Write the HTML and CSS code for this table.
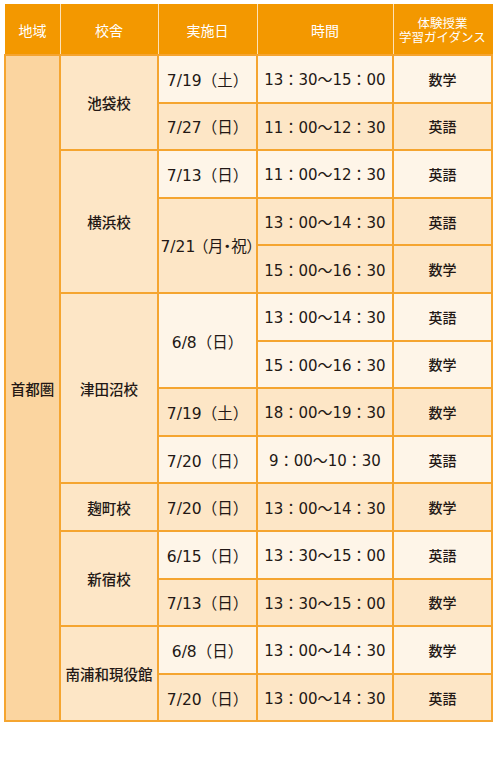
FILE: index.html
```html
<!DOCTYPE html>
<html lang="ja">
<head>
<meta charset="utf-8">
<link rel="stylesheet" href="styles.css">
</head>
<body>
<div class="page">
<table class="tbl">
  <colgroup>
    <col class="c1"><col class="c2"><col class="c3"><col class="c4"><col class="c5">
  </colgroup>
  <thead>
    <tr class="hd">
      <th>地域</th><th>校舎</th><th>実施日</th><th>時間</th><th class="sm"><span class="ln">体験授業</span><span class="ln">学習ガイダンス</span></th>
    </tr>
  </thead>
  <tbody>
    <tr class="lt"><td class="region" rowspan="14">首都圏</td><td class="school" rowspan="2">池袋校</td><td class="date">7/19（土）</td><td class="time">13：30〜15：00</td><td class="subj">数学</td></tr>
    <tr class="pk"><td class="date">7/27（日）</td><td class="time">11：00〜12：30</td><td class="subj">英語</td></tr>
    <tr class="lt"><td class="school" rowspan="3">横浜校</td><td class="date">7/13（日）</td><td class="time">11：00〜12：30</td><td class="subj">英語</td></tr>
    <tr class="pk"><td rowspan="2" class="date narrow">7/21 （月・祝）</td><td class="time">13：00〜14：30</td><td class="subj">英語</td></tr>
    <tr class="pk"><td class="time">15：00〜16：30</td><td class="subj">数学</td></tr>
    <tr class="lt"><td class="school" rowspan="4">津田沼校</td><td rowspan="2" class="date">6/8（日）</td><td class="time">13：00〜14：30</td><td class="subj">英語</td></tr>
    <tr class="lt"><td class="time">15：00〜16：30</td><td class="subj">数学</td></tr>
    <tr class="pk"><td class="date">7/19（土）</td><td class="time">18：00〜19：30</td><td class="subj">数学</td></tr>
    <tr class="lt"><td class="date">7/20（日）</td><td class="time">9：00〜10：30</td><td class="subj">英語</td></tr>
    <tr class="pk"><td class="school">麹町校</td><td class="date">7/20（日）</td><td class="time">13：00〜14：30</td><td class="subj">数学</td></tr>
    <tr class="lt"><td class="school" rowspan="2">新宿校</td><td class="date">6/15（日）</td><td class="time">13：30〜15：00</td><td class="subj">英語</td></tr>
    <tr class="pk"><td class="date">7/13（日）</td><td class="time">13：30〜15：00</td><td class="subj">数学</td></tr>
    <tr class="lt"><td class="school" rowspan="2">南浦和現役館</td><td class="date">6/8（日）</td><td class="time">13：00〜14：30</td><td class="subj">数学</td></tr>
    <tr class="pk"><td class="date">7/20（日）</td><td class="time">13：00〜14：30</td><td class="subj">英語</td></tr>
  </tbody>
</table>
</div>
</body>
</html>
```

FILE: styles.css
```css
html, body {
  margin: 0;
  padding: 0;
  background: #ffffff;
}
.page {
  padding: 4px;
  width: 487px;
  font-family: "DejaVu Sans", "Noto Sans CJK JP", sans-serif;
  color: #231815;
}
.tbl {
  border-collapse: collapse;
  table-layout: fixed;
  width: 487px;
  font-size: 15px;
}
.c1 { width: 55px; }
.c2 { width: 98px; }
.c3 { width: 99px; }
.c4 { width: 136px; }
.c5 { width: 99px; }

.tbl th {
  background: #f39800;
  color: #ffffff;
  font-family: "Noto Sans CJK JP", sans-serif;
  font-weight: normal;
  font-size: 14px;
  height: 49px;
  padding: 0;
  text-align: center;
  border-left: 1px solid #fde2b8;
  border-right: 1px solid #fde2b8;
  border-top: 1px solid #f39800;
  border-bottom: 2px solid #f5a430;
}
.tbl th:first-child { border-left: 1px solid #f39800; }
.tbl th:last-child { border-right: 1px solid #f39800; }
.tbl th.sm {
  font-size: 12.5px;
  line-height: 14px;
}
.tbl th .ln {
  display: block;
  height: 14px;
}
.tbl td {
  height: 45.6px;
  padding: 0;
  text-align: center;
  border: 2px solid #f5a530;
  white-space: nowrap;
}
.tbl .lt td { background: #fef5e8; }
.tbl .pk td { background: #fde6c6; }
.tbl td.school {
  background: #fde6c6;
  font-family: "Noto Sans CJK JP", sans-serif;
  font-size: 14.5px;
  font-weight: 500;
}
.tbl td.region {
  background: #fbd5a0;
  font-family: "Noto Sans CJK JP", sans-serif;
  font-size: 14.5px;
  font-weight: 500;
}
.tbl td.subj {
  font-family: "Noto Sans CJK JP", sans-serif;
  font-size: 14px;
  font-weight: 500;
}
.tbl td.date { font-size: 15.5px; }
.tbl td.time { font-size: 15px; }
.tbl td.narrow {
  font-size: 15.5px;
  font-feature-settings: "palt";
}
```
